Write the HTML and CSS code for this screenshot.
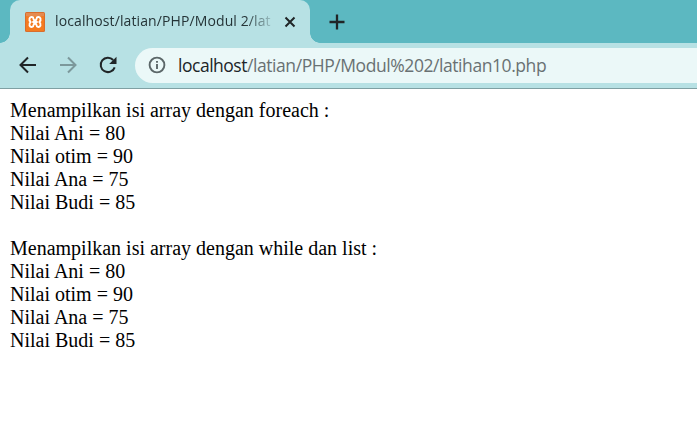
FILE: index.html
```html
<!DOCTYPE html>
<html lang="id">
<head>
<meta charset="utf-8">
<title>localhost/latian/PHP/Modul 2/latihan10.php</title>
<link rel="stylesheet" href="styles.css">
</head>
<body>
<header class="browser">
  <div class="tab-strip">
    <div class="tab">
      <svg class="favicon" viewBox="0 0 20 20">
        <rect width="20" height="20" rx="1.5" fill="#d96d2d"/>
        <rect x="1" y="1" width="18" height="18" rx="1" fill="#f47b20"/>
        <path d="M1 1h18v3Q10 5 1 4z" fill="#e58b50"/>
        <path d="M8 10H12M4.500 6.500C5.500 4.300 8.500 4.500 8.500 7C8.500 8 9 8.300 10 8.300C11 8.300 11.500 8 11.500 7C11.500 4.500 14.500 4.300 15.500 6.500C16 8 15.500 9 14.300 10C15.500 11 16 12 15.500 13.500C14.500 15.700 11.500 15.500 11.500 13C11.500 12 11 11.700 10 11.700C9 11.700 8.500 12 8.500 13C8.500 15.500 5.500 15.700 4.500 13.500C4 12 4.500 11 5.700 10C4.500 9 4 8 4.500 6.500Z" fill="none" stroke="#fff" stroke-width="1.900" stroke-linecap="round" stroke-linejoin="round"/>
      </svg>
      <span class="tab-title">localhost/latian/PHP/Modul 2/lat</span>
      <svg class="close" viewBox="0 0 12 12"><path d="M1.500 1.500l9 9M10.500 1.500l-9 9"/></svg>
    </div>
    <svg class="new-tab" viewBox="0 0 16 16"><path d="M8 .5v15M.5 8h15"/></svg>
  </div>
  <div class="toolbar">
    <svg class="nav" viewBox="0 0 20 20"><path d="M18 10H3M10 2.500L2.500 10l7.500 7.500"/></svg>
    <svg class="nav disabled" viewBox="0 0 20 20"><path d="M2 10h15M10 2.500L17.500 10 10 17.500"/></svg>
    <svg class="nav" viewBox="0 0 20 20"><path d="M16.700 12.300A7.200 7.200 0 1 1 15.200 5"/><path class="solid" d="M18.500 1.700v7.300h-7.300z"/></svg>
    <div class="address">
      <svg class="info" viewBox="0 0 18 18"><circle cx="9" cy="9" r="7.400"/><path d="M9 8v5M9 5v1.700"/></svg>
      <span class="url"><span class="host">localhost</span>/latian/PHP/Modul%202/latihan10.php</span>
    </div>
  </div>
</header>
<main class="page">
  Menampilkan isi array dengan foreach :<br>
  Nilai Ani = 80<br>
  Nilai otim = 90<br>
  Nilai Ana = 75<br>
  Nilai Budi = 85<br>
  <br>
  Menampilkan isi array dengan while dan list :<br>
  Nilai Ani = 80<br>
  Nilai otim = 90<br>
  Nilai Ana = 75<br>
  Nilai Budi = 85<br>
</main>
</body>
</html>
```
FILE: styles.css
```css
* { box-sizing: border-box; }
body { margin: 0; background: #fff; overflow: hidden; }
svg { display: block; flex: none; fill: none; stroke: #202527; }
.browser { font-family: "Open Sans", "Noto Sans", sans-serif; }
.tab-strip {
  display: flex;
  align-items: center;
  height: 43px;
  padding-left: 10px;
  background: #5cb8c1;
}
.tab {
  position: relative;
  display: flex;
  align-items: center;
  width: 300px;
  height: 43px;
  padding-left: 15px;
  border-radius: 10px 10px 0 0;
  background: #b7e1e4;
}
.tab::before, .tab::after {
  content: "";
  position: absolute;
  bottom: 0;
  width: 10px;
  height: 10px;
}
.tab::before { left: -10px; background: radial-gradient(circle at 0 0, transparent 9.5px, #b7e1e4 10px); }
.tab::after { right: -10px; background: radial-gradient(circle at 100% 0, transparent 9.5px, #b7e1e4 10px); }
.favicon { width: 20px; height: 20px; stroke: none; }
.tab-title {
  width: 219px;
  margin: -1px 0 0 10px;
  white-space: nowrap;
  font-size: 14px;
  line-height: 22px;
  letter-spacing: 0.11px;
  color: #253437;
  -webkit-mask-image: linear-gradient(to right, #000 190px, transparent 222px);
  mask-image: linear-gradient(to right, #000 190px, transparent 222px);
}
.close { width: 12px; height: 12px; margin-left: 10px; stroke-width: 2; }
.new-tab { width: 16px; height: 16px; margin-left: 19px; stroke-width: 2.3; }
.toolbar {
  display: flex;
  align-items: center;
  height: 46px;
  padding: 0 0 1px 18px;
  border-bottom: 1px solid #7fa0a3;
  background: #b7e1e4;
}
.nav { width: 20px; height: 20px; margin-right: 20px; stroke-width: 2; }
.nav .solid { fill: #202527; stroke: none; }
.disabled { stroke: #7c989b; }
.address {
  display: flex;
  flex: 1;
  align-items: center;
  height: 35px;
  margin-left: -3px;
  padding-left: 13px;
  border-radius: 18px 0 0 18px;
  background: #ebf8f8;
}
.info { width: 18px; height: 18px; stroke: #5c6769; stroke-width: 1.9; }
.url {
  margin-left: 12px;
  font-size: 17.5px;
  line-height: 24px;
  letter-spacing: -0.43px;
  white-space: nowrap;
  color: #697173;
}
.host { color: #202527; letter-spacing: -0.48px; }
.page {
  padding: 10px;
  font-family: "Liberation Serif", "Times New Roman", serif;
  font-size: 20px;
  line-height: 23px;
  color: #000;
}
```
